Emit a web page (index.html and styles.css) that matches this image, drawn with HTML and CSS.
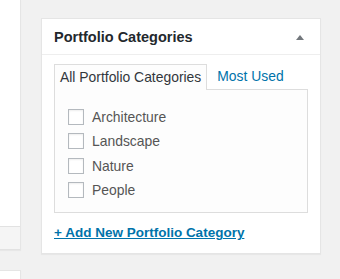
FILE: index.html
```html
<!DOCTYPE html>
<html lang="en">
<head>
    <meta charset="UTF-8">
    <title>Portfolio Categories</title>
    <link rel="stylesheet" href="styles.css">
</head>
<body>

<div class="wrap">
    <div class="side">
        <div class="side-box">
            <div class="side-body"></div>
            <div class="side-foot"></div>
        </div>
        <div class="side-box side-next"></div>
    </div>

    <div class="postbox">
        <div class="hndle">
            <h2>Portfolio Categories</h2>
            <span class="toggle"></span>
        </div>
        <div class="inside">
            <ul class="tabs">
                <li class="tab active">All Portfolio Categories</li>
                <li class="tab"><a href="#">Most Used</a></li>
            </ul>
            <div class="panel">
                <ul class="checklist">
                    <li><label><span class="check"></span>Architecture</label></li>
                    <li><label><span class="check"></span>Landscape</label></li>
                    <li><label><span class="check"></span>Nature</label></li>
                    <li><label><span class="check"></span>People</label></li>
                </ul>
            </div>
            <a class="add-new" href="#">+ Add New Portfolio Category</a>
        </div>
    </div>
</div>

</body>
</html>
```

FILE: styles.css
```css
body {
    margin: 0;
    background: #f1f1f1;
    font-family: "Liberation Sans", Arial, sans-serif;
    color: #444;
    font-size: 13.9px;
}

.wrap {
    display: flex;
    align-items: flex-start;
    height: 279px;
    overflow: hidden;
}

.side {
    width: 21px;
    flex-shrink: 0;
}
.side-box {
    background: #fff;
    border-right: 1px solid #e5e5e5;
    box-shadow: 0 1px 1px rgba(0, 0, 0, 0.04);
}
.side-body {
    height: 226px;
}
.side-foot {
    height: 22px;
    background: #f5f5f5;
    border-top: 1px solid #e2e2e2;
    border-bottom: 1px solid #e2e2e2;
}
.side-next {
    margin-top: 20px;
    height: 20px;
    border-top: 1px solid #e5e5e5;
}

.postbox {
    margin: 18px 0 0 20px;
    width: 278px;
    background: #fff;
    border: 1px solid #e5e5e5;
    box-shadow: 0 1px 1px rgba(0, 0, 0, 0.04);
}

.hndle {
    display: flex;
    align-items: center;
    justify-content: space-between;
    height: 35px;
    padding: 0 16px 0 12px;
    border-bottom: 1px solid #eee;
}
.hndle h2 {
    margin: 0;
    font-size: 14.5px;
    font-weight: bold;
    color: #23282d;
}
.toggle {
    width: 0;
    height: 0;
    border-left: 4px solid transparent;
    border-right: 4px solid transparent;
    border-bottom: 5px solid #72777c;
    margin-top: 1px;
}

.inside {
    padding: 9px 12px 13px 12px;
}

.tabs {
    list-style: none;
    margin: 0;
    padding: 0;
    display: flex;
    align-items: flex-end;
}
.tab {
    height: 25px;
    line-height: 25px;
    padding: 0 5px;
}
.tab a {
    color: #0073aa;
    text-decoration: none;
    padding: 0 5px;
}
.tab.active {
    background: #fdfdfd;
    border: 1px solid #ddd;
    border-bottom: none;
    color: #32373c;
    margin-bottom: -1px;
    position: relative;
}

.panel {
    background: #fdfdfd;
    border: 1px solid #ddd;
    height: 122px;
}
.checklist {
    list-style: none;
    margin: 0;
    padding: 15px 0 0 13px;
}
.checklist li {
    height: 24.3px;
    display: flex;
    align-items: center;
}
.checklist label {
    display: flex;
    align-items: center;
    color: #555;
}
.check {
    width: 14px;
    height: 14px;
    border: 1px solid #b4b9be;
    background: #fff;
    box-shadow: inset 0 1px 2px rgba(0, 0, 0, 0.07);
    margin-right: 8px;
}

.add-new {
    display: inline-block;
    margin-top: 12px;
    color: #0073aa;
    font-size: 13.5px;
    font-weight: bold;
    text-decoration: underline;
}
```
